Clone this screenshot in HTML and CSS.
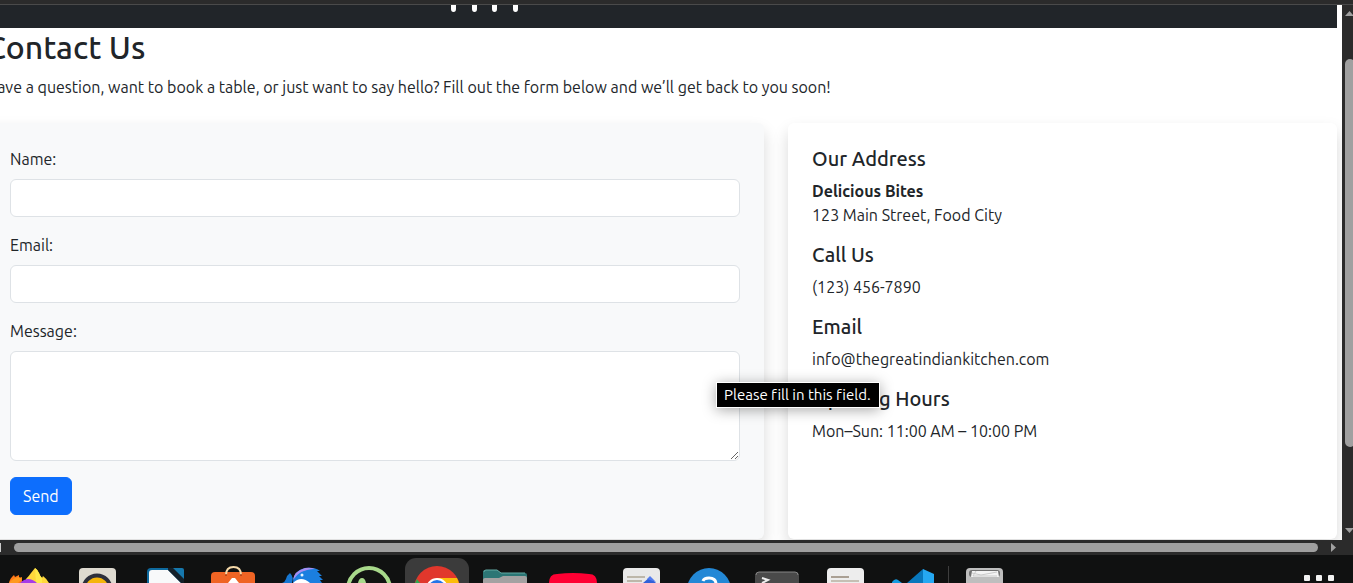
FILE: index.html
```html
<!DOCTYPE html>
<html lang="en">
<head>
<meta charset="utf-8">
<title>Contact Us</title>
<link rel="stylesheet" href="styles.css">
</head>
<body>
<div class="chrome-edge"></div>
<div class="window">
  <div class="view">
    <header class="navbar">
      <svg width="68" height="7" viewBox="0 0 68 7" fill="#fff" aria-hidden="true"><path d="M0 0h5v4q0 3-2.500 3t-2.500-3zM21 0h5v4q0 3-2.500 3t-2.500-3zM41 0h5v4q0 3-2.500 3t-2.500-3zM62 0h5v4q0 3-2.500 3t-2.500-3z"/></svg>
    </header>
    <main class="page">
      <h2 class="title">Contact Us</h2>
      <p class="lead">Have a question, want to book a table, or just want to say hello? Fill out the form below and we’ll get back to you soon!</p>
      <div class="columns">
        <form class="card card-form">
          <div class="field"><label for="name">Name:</label><input class="control" id="name" type="text"></div>
          <div class="field"><label for="email">Email:</label><input class="control" id="email" type="email"></div>
          <div class="field"><label for="message">Message:</label><textarea class="control control-area" id="message"></textarea></div>
          <button class="send" type="button">Send</button>
        </form>
        <section class="card card-info">
          <h5>Our Address</h5>
          <p><strong>Delicious Bites</strong><br>123 Main Street, Food City</p>
          <h5>Call Us</h5>
          <p>(123) 456-7890</p>
          <h5>Email</h5>
          <p>info@thegreatindiankitchen.com</p>
          <h5>Opening Hours</h5>
          <p>Mon–Sun: 11:00 AM – 10:00 PM</p>
        </section>
      </div>
    </main>
    <div class="tooltip" role="tooltip">Please fill in this field.</div>
  </div>
  <div class="vbar" aria-hidden="true">
    <svg width="9" height="5" viewBox="0 0 9 5"><path d="M0 5L4.500 0 9 5z" fill="#a0a0a0"/></svg>
    <div class="vthumb"></div>
    <svg width="9" height="5" viewBox="0 0 9 5"><path d="M0 0L4.500 5 9 0z" fill="#a0a0a0"/></svg>
  </div>
</div>
<div class="hbar" aria-hidden="true">
  <div class="sliver"></div>
  <div class="hthumb"></div>
  <svg width="5" height="9" viewBox="0 0 5 9"><path d="M0 0L5 4.500 0 9z" fill="#a0a0a0"/></svg>
</div>
<footer class="dock" aria-hidden="true">
  <svg class="app" viewBox="0 0 68 28"><path d="M14 28q1-5 5-8l1 2 4-2v3l3-1v6z" fill="#ff7a1a"/><path d="M31 24q3-3 5-6l4-5q3 2 4 5 1 3 3 5l1-2q4 3 6 7H31z" fill="#ffd83b"/><path d="M40 13q3 2 4 5 1 3 3 5v5h-6z" fill="#ffe94a"/><path d="M25 28q8-8 17 0z" fill="#a63be8"/><path d="M14 28q4-5 10-6l3 2-4 4z" fill="#ff9a1f"/></svg>
  <svg class="app" viewBox="0 0 68 28"><rect x="16" y="13" width="37" height="30" rx="4" fill="#dedad0"/><circle cx="34" cy="34" r="13.500" fill="#f5b50a" stroke="#2d2f3b" stroke-width="4"/></svg>
  <svg class="app" viewBox="0 0 68 28"><path d="M16 28V17q0-4 4-4h21l12 12v3z" fill="#0e6a9f"/><path d="M18 28V18q0-3 3-3h16l13 13z" fill="#f8f9fa"/><path d="M37 13h5l11 11v4h-3L37 15z" fill="#14202a"/><path d="M42 13h9q2 0 2 2v9z" fill="#1678ad"/></svg>
  <svg class="app" viewBox="0 0 68 28"><rect x="12" y="17" width="44" height="30" rx="4" fill="#ef6424"/><path d="M27 20q0-8 7.500-8t7.500 8" fill="none" stroke="#f5d9a9" stroke-width="2"/><circle cx="27" cy="20" r="1" fill="#ad3d11"/><circle cx="42" cy="20" r="1" fill="#ad3d11"/><path d="M29 28l4-5h3l4 5z" fill="#fff"/></svg>
  <svg class="app" viewBox="0 0 68 28"><path d="M15 28q3-1 4-4 1-4 4-6 4 4 2 10z" fill="#1677d2"/><path d="M26 28q0-12 12-15 10-1 15 3h-3l5 5h-3l4 4h-3l2 3z" fill="#1b7fe0"/><path d="M26 25q1-9 12-12 6-1 10 1-15 0-22 11z" fill="#a68df1"/><path d="M28 25q3-8 14-10l6-1q-10 6-8 14H27z" fill="#1b7fe0"/><path d="M26 28q8-8 17 0z" fill="#fff"/><circle cx="35" cy="20" r="1.500" fill="#e8f4ff"/></svg>
  <svg class="app" viewBox="0 0 68 28"><circle cx="34" cy="34" r="21" fill="#121412" stroke="#a8d98b" stroke-width="4"/><path d="M23 28q1-5 4-5 3 0 4 5z" fill="#a8d98b"/></svg>
  <svg class="app" viewBox="0 0 68 28"><rect x="2" y="3" width="64" height="60" rx="11" fill="#3b3b3b"/><circle cx="34" cy="34" r="23" fill="#e1372c"/><path d="M34 23h20q2 4 2 7H34z" fill="#fcbd0b"/><path d="M12 28l2-4 3 4z" fill="#2fa84f"/><circle cx="34" cy="34" r="11" fill="#fff"/><circle cx="34" cy="34" r="9" fill="#2374e8"/></svg>
  <svg class="app" viewBox="0 0 68 28"><path d="M12 28V17q0-2 2-2h12l4 3h24q2 0 2 2v8z" fill="#2c7675"/><path d="M13 17q0-2 2-2h11l4 3h24" fill="none" stroke="#63aaa4"/><path d="M12 28v-3q0-2 2-2h14l4-2h22q2 0 2 2v5z" fill="#a4a2a2"/></svg>
  <svg class="app" viewBox="0 0 68 28"><path d="M10 28q0-9 8-9 16-2 32 0 8 0 8 9z" fill="#ff0033"/></svg>
  <svg class="app" viewBox="0 0 68 28"><rect x="16" y="13" width="37" height="30" rx="4" fill="#e9e9e9"/><path d="M20 22h18M20 26h15" stroke="#bdb7aa" stroke-width="2"/><path d="M36 28l7-6 6 6z" fill="#3160d8"/><path d="M40 24l3-3 6 6" fill="#547ced"/></svg>
  <svg class="app" viewBox="0 0 68 28"><circle cx="34" cy="35" r="22" fill="#2388d6"/><path d="M28 26q1-3 6-3 7 0 7 6" fill="none" stroke="#fff" stroke-width="3"/></svg>
  <svg class="app" viewBox="0 0 68 28"><rect x="12" y="17" width="44" height="30" rx="4" fill="#4a4a4a"/><path d="M13 20q0-3 3-3h36q3 0 3 3" fill="none" stroke="#858585"/><path d="M19 23l6 2-6 3" fill="none" stroke="#eee" stroke-width="2"/></svg>
  <svg class="app" viewBox="0 0 68 28"><rect x="16" y="13" width="37" height="30" rx="4" fill="#ededed"/><path d="M20 22h18" stroke="#aaa094" stroke-width="2"/><path d="M20 26h28" stroke="#c5bfb4" stroke-width="2"/></svg>
  <svg class="app" viewBox="0 0 68 28"><path d="M13 27q3-4 6-2l4 3H13z" fill="#159be0"/><path d="M28 28l16-14 5 14z" fill="#0877bc"/><path d="M44 14l11 5v9H44z" fill="#25a8f2"/></svg>
  <span class="divider"></span>
  <svg class="app" viewBox="0 0 68 28"><rect x="16" y="13" width="37" height="30" rx="4" fill="#bebebe"/><rect x="19" y="15" width="31" height="7" rx="3" fill="#717171"/><path d="M21 22l1-6h26l1 6z" fill="#f3f3f3"/><path d="M22 18l9 2 16-3M26 16l-3 5h24" fill="none" stroke="#c9c9c9"/></svg>
  <svg class="grid-dots" width="30" height="28" viewBox="0 0 30 28" fill="#f2f2f2"><rect y="20" width="6" height="6" rx="1"/><rect x="12" y="20" width="6" height="6" rx="1"/><rect x="24" y="20" width="6" height="6" rx="1"/></svg>
</footer>
</body>
</html>
```
FILE: styles.css
```css
* { box-sizing: border-box; }
body {
  margin: 0;
  height: 100vh;
  display: flex;
  flex-direction: column;
  overflow: hidden;
  background: #2b2b2b;
  color: #212529;
  font: 16px/24px Ubuntu, "Noto Sans", sans-serif;
}
h2, h5, p { margin: 0; }
.chrome-edge {
  flex: none;
  height: 5px;
  background: #2b2b2b;
  border-bottom: 1px solid #4a4a4a;
}
.window { flex: 1; min-height: 0; display: flex; }
.view {
  position: relative;
  flex: 1;
  min-width: 0;
  overflow: hidden;
  background: #fff;
}
.navbar {
  height: 23px;
  margin-right: 5px;
  padding-left: 451px;
  background: #212529;
  display: flex;
  align-items: flex-start;
}
.page { margin: 0 5px 0 -14px; }
.title {
  margin-bottom: 8px;
  font-size: 32px;
  line-height: 39px;
  font-weight: 500;
}
.lead { margin-bottom: 24px; white-space: nowrap; }
.columns {
  display: grid;
  grid-template-columns: repeat(12, 1fr);
  gap: 24px;
}
.card {
  padding: 24px;
  border-radius: 6px;
  box-shadow: 0 8px 16px rgba(0, 0, 0, .15);
}
.card-form { grid-column: span 7; background: #f8f9fa; }
.card-info { grid-column: span 5; background: #fff; }
.card-info h5 {
  margin-bottom: 8px;
  font-size: 20px;
  line-height: 24px;
  font-weight: 500;
}
.card-info p { margin-bottom: 16px; }
.field {
  display: flex;
  flex-direction: column;
  gap: 8px;
  margin-bottom: 16px;
}
.control {
  width: 100%;
  height: 38px;
  padding: 6px 12px;
  border: 1px solid #dee2e6;
  border-radius: 6px;
  background: #fff;
  color: inherit;
  font: inherit;
}
.control-area { height: 110px; resize: vertical; }
.send {
  display: block;
  padding: 6px 12px;
  border: 1px solid #0d6efd;
  border-radius: 6px;
  background: #0d6efd;
  color: #fff;
  font: inherit;
}
.tooltip {
  position: absolute;
  top: 377px;
  left: 716px;
  padding: 0 8px 0 7px;
  border: 1px solid #fff;
  background: #000;
  color: #fff;
  box-shadow: 0 2px 14px rgba(0, 0, 0, .35);
  font-size: 15px;
  font-variant-ligatures: none;
  white-space: nowrap;
}
.vbar {
  flex: none;
  width: 11px;
  padding: 6px 0 7px 3px;
  display: flex;
  flex-direction: column;
  overflow: hidden;
}
.vbar svg { flex: none; }
.vthumb {
  flex: 388;
  width: 10px;
  margin: 43px 0 81px;
  border-radius: 5px;
  background: #a0a0a0;
}
.hbar {
  flex: none;
  height: 15px;
  padding-right: 17px;
  display: flex;
  align-items: center;
  gap: 13px;
}
.sliver { width: 1px; height: 9px; background: #ccc; }
.hthumb { flex: 1; height: 9px; border-radius: 5px; background: #a0a0a0; }
.dock {
  flex: none;
  height: 28px;
  padding-right: 19px;
  display: flex;
  background: #101111;
  overflow: hidden;
}
.app { flex: none; width: 68px; height: 28px; }
.app:first-child { margin-left: -5px; }
.divider { flex: none; width: 1px; margin: 11px 1px 0; background: #3e3e3e; }
.grid-dots { margin-left: auto; }
```
